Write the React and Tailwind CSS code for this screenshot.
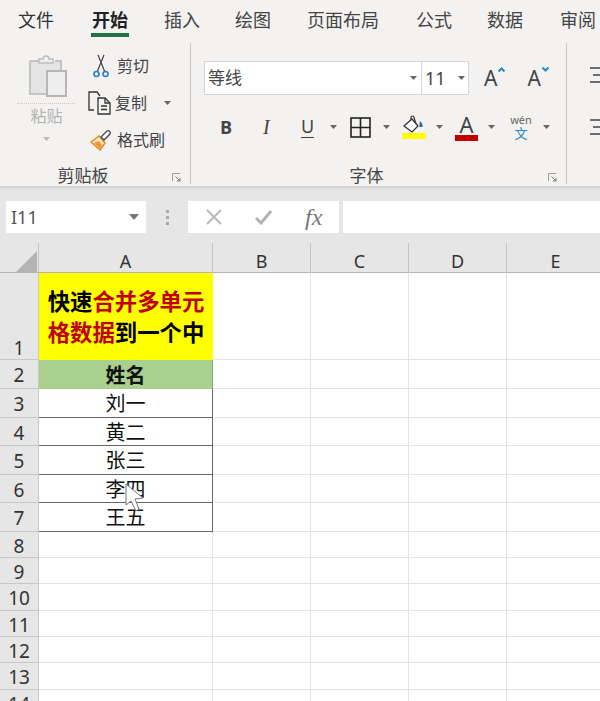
const CJK = { fontFamily: '"Noto Sans","Noto Sans CJK SC",sans-serif' }

const tabs = [
  { t: '文件', c: 'ml-[18px] text-[#333]' },
  { t: '开始', c: 'ml-[37px] font-bold text-[#222]' },
  { t: '插入', c: 'ml-[35px] text-[#444]' },
  { t: '绘图', c: 'ml-[35px] text-[#444]' },
  { t: '页面布局', c: 'ml-[36px] text-[#444]' },
  { t: '公式', c: 'ml-[37px] text-[#444]' },
  { t: '数据', c: 'ml-[35px] text-[#444]' },
  { t: '审阅', c: 'ml-[37px] text-[#444]' },
]

const rowHeights = [87, 29, 29, 28, 29, 28, 29, 26, 26, 27, 26, 26, 27, 26]

const Caret = ({ className = '', color = '#666' }) => (
  <svg width="7" height="4" viewBox="0 0 7 4" className={className}>
    <path d="M0 0h7L3.5 4z" fill={color} />
  </svg>
)

const Launcher = ({ className = '' }) => (
  <svg width="9" height="9" viewBox="0 0 9 9" className={className} fill="none">
    <path d="M8 .5H.5V8" stroke="#999" />
    <path d="M3.5 3.5 8 8M8 5v3H5" stroke="#777" />
  </svg>
)

const PasteIcon = () => (
  <svg width="40" height="44" viewBox="0 0 40 44" fill="none">
    <path d="M2 7h9M27 7h6v11M2 7v33h16" stroke="#c4c4c4" strokeWidth="2" fill="#e6e6e6" />
    <rect x="3" y="8" width="29" height="31" fill="#e4e4e4" />
    <path d="M11 7V5h4a3 3 0 0 1 6 0h4v4H11z" fill="#eee" stroke="#bdbdbd" strokeWidth="1.5" />
    <rect x="19" y="17" width="19" height="25" fill="#eeeeee" stroke="#b5b5b5" strokeWidth="2" />
  </svg>
)

const Scissors = () => (
  <svg width="16" height="24" viewBox="0 0 16 24" fill="none">
    <path d="M11 1 4.5 17M5 1l6.500 16" stroke="#444" strokeWidth="1.200" />
    <circle cx="3.500" cy="20" r="2.500" stroke="#2b7cd3" strokeWidth="1.600" />
    <circle cx="12.500" cy="20" r="2.500" stroke="#2b7cd3" strokeWidth="1.600" />
  </svg>
)

const CopyIcon = () => (
  <svg width="23" height="24" viewBox="0 0 23 24" fill="none" stroke="#333" strokeWidth="1.300">
    <path d="M6 19H1V1h8l3 4" />
    <path d="M10 7h7l5 5v11H10z" fill="#f3f2f1" />
    <path d="M17 7v5h5M13 15h6M13 18.500h6" />
  </svg>
)

const BrushIcon = () => (
  <svg width="23" height="21" viewBox="0 0 23 21" fill="none">
    <path d="M1 12 9 6l6 7-5 7z" fill="#fbe3c4" stroke="#e08a1e" strokeWidth="1.400" />
    <path d="M4 13l6 6 2-4-3-4z" fill="#ec9a2e" />
    <path d="m11 7 3 3 6-6c1-2-1-4-3-3z" fill="#fff" stroke="#444" strokeWidth="1.300" />
  </svg>
)

const BorderIcon = () => (
  <svg width="21" height="21" viewBox="0 0 21 21" fill="none" stroke="#222" strokeWidth="1.600">
    <rect x="1" y="1" width="19" height="19" />
    <path d="M10.500 1v19M1 10.500h19" />
  </svg>
)

const FillIcon = () => (
  <svg width="24" height="24" viewBox="0 0 24 24" fill="none">
    <path d="m2 11 8-7 6 7-6 6z" fill="#fff" stroke="#333" strokeWidth="1.300" />
    <path d="M9 5V2.500a1.500 1.500 0 0 1 3 0L14 9" stroke="#333" strokeWidth="1.200" />
    <path d="M18 6c2 2 3 4 2.500 6h-3V8z" fill="#1f6f9f" />
    <rect y="18" width="24" height="6" fill="#ffff00" />
  </svg>
)

const XIcon = () => (
  <svg width="16" height="16" viewBox="0 0 16 16" stroke="#b9b9b9" strokeWidth="2">
    <path d="m1 1 14 14M15 1 1 15" />
  </svg>
)

const CheckIcon = () => (
  <svg width="17" height="15" viewBox="0 0 17 15" fill="none" stroke="#b3b3b3" strokeWidth="3">
    <path d="m1 8 5 5L16 1" />
  </svg>
)

const AlignLines = ({ className = '' }) => (
  <svg width="12" height="18" viewBox="0 0 12 18" stroke="#444" strokeWidth="1.500" className={className}>
    <path d="M0 2h12M3 9h9M0 16h12" />
  </svg>
)

const Pointer = () => (
  <svg width="20" height="30" viewBox="0 0 20 30" className="absolute left-[125px] top-[483px]" fill="#fff" stroke="#777" strokeWidth="1">
    <path d="M1 1v21l5-4 5 10 3-2-4-10 8-1z" />
  </svg>
)

const GroupLabel = ({ children }) => (
  <div className="mt-auto mb-[-1px] grid h-[22px] grid-cols-[1fr_auto_1fr] items-center text-[17px] text-[#444]">
    <span />
    <span className="mr-[24px]">{children}</span>
    <Launcher className="mr-[9px] mt-[4px] justify-self-end" />
  </div>
)

const Clipboard = () => (
  <div className="flex h-[141px] w-[191px] shrink-0 flex-col border-r border-[#c8c8c8]">
    <div className="flex">
      <div className="ml-[17px] flex w-[58px] flex-col items-center">
        <div className="mt-[11px] mr-[-4px]">
          <PasteIcon />
        </div>
        <div className="mt-[5px] w-full border-t border-dotted border-[#c9c9c9]" />
        <span className="ml-[1px] text-[16px] text-[#b3b3b3]">粘贴</span>
        <Caret className="mt-[9px]" color="#bbb" />
      </div>
      <div className="ml-[13px] flex flex-col text-[16px] text-[#444]">
        <div className="mt-[10px] ml-[5px] flex h-[26px] items-center gap-[8px]">
          <Scissors />
          <span>剪切</span>
        </div>
        <div className="mt-[11px] flex h-[26px] items-center gap-[4px]">
          <CopyIcon />
          <span>复制</span>
          <Caret className="ml-[13px]" />
        </div>
        <div className="mt-[11px] ml-[2px] flex h-[26px] items-center gap-[4px]">
          <BrushIcon />
          <span>格式刷</span>
        </div>
      </div>
    </div>
    <GroupLabel>剪贴板</GroupLabel>
  </div>
)

const FontGroup = () => (
  <div className="flex h-[141px] w-[376px] shrink-0 flex-col border-r border-[#c8c8c8]">
    <div className="mt-[18px] flex items-center">
      <div className="ml-[13px] flex h-[34px] w-[265px] border border-[#d6d6d6] bg-white text-[#444]">
        <div className="flex w-[217px] items-center justify-between border-r border-[#d6d6d6] pl-[3px] pr-[4px] text-[17px]">
          <span>等线</span>
          <Caret />
        </div>
        <div className="flex flex-1 items-center justify-between pl-[3px] pr-[3px] text-[18px]">
          <span>11</span>
          <Caret />
        </div>
      </div>
      <div className="ml-[15px] flex items-start text-[#444]">
        <span className="text-[21px] leading-[26px]">A</span>
        <svg width="7" height="5" viewBox="0 0 7 5" fill="none" stroke="#2a86c4" strokeWidth="2" className="mt-[2px] ml-[1px]">
          <path d="m.5 4.500 3-3 3 3" />
        </svg>
      </div>
      <div className="ml-[22px] flex items-start text-[#444]">
        <span className="text-[21px] leading-[26px]">A</span>
        <svg width="7" height="5" viewBox="0 0 7 5" fill="none" stroke="#2a86c4" strokeWidth="2" className="mt-[2px] ml-[1px]">
          <path d="m.5.500 3 3 3-3" />
        </svg>
      </div>
    </div>
    <div className="mt-[14px] flex h-[36px] items-center text-[#444]">
      <span className="ml-[29px] w-[13px] text-[18px] font-bold" style={{ fontFamily: '"Open Sans",sans-serif' }}>B</span>
      <span className="ml-[30px] w-[10px] text-[20px] italic" style={{ fontFamily: '"Liberation Serif",serif' }}>I</span>
      <span className="ml-[28px] w-[13px] border-b border-[#444] text-[18px] leading-[21px]">U</span>
      <Caret className="ml-[16px]" />
      <div className="ml-[13px]">
        <BorderIcon />
      </div>
      <Caret className="ml-[12px]" />
      <div className="ml-[12px]">
        <FillIcon />
      </div>
      <Caret className="ml-[10px]" />
      <div className="ml-[12px] flex w-[23px] flex-col items-center">
        <span className="text-[22px] leading-[22px]">A</span>
        <div className="h-[6px] w-[23px] bg-[#c00000]" />
      </div>
      <Caret className="ml-[10px]" />
      <div className="ml-[14px] flex w-[24px] flex-col items-center">
        <span className="text-[11px] leading-[11px] text-[#666]">wén</span>
        <span className="mt-[2px] text-[13px] leading-[13px] text-[#2a86c4]">文</span>
      </div>
      <Caret className="ml-[10px]" />
    </div>
    <GroupLabel>字体</GroupLabel>
  </div>
)

const Ribbon = () => (
  <div className="bg-[#f3f2f1]">
    <div className="flex h-[43px] items-start text-[18px] whitespace-nowrap">
      {tabs.map((tab) => (
        <div key={tab.t} className={`${tab.c} flex shrink-0 flex-col items-center`}>
          <span className="mt-[8px] leading-[25px]">{tab.t}</span>
          {tab.t === '开始' && <div className="h-[4px] w-[38px] bg-[#217346]" />}
        </div>
      ))}
    </div>
    <div className="flex h-[143px]">
      <Clipboard />
      <FontGroup />
      <div className="flex flex-col pt-[23px]">
        <AlignLines className="ml-[23px]" />
        <AlignLines className="ml-[23px] mt-[34px]" />
      </div>
    </div>
  </div>
)

const FormulaBar = () => (
  <div className="flex h-[57px] bg-[#e6e6e6] pt-[15px] shadow-[inset_0_4px_3px_-2px_#cfcfcf]">
    <div className="ml-[6px] flex h-[32px] w-[140px] items-center justify-between bg-white pl-[5px] pr-[7px] text-[18px] text-[#555]">
      <span>I11</span>
      <svg width="10" height="6" viewBox="0 0 10 6">
        <path d="M0 0h10L5 6z" fill="#777" />
      </svg>
    </div>
    <div className="ml-[19px] mr-[19px] flex h-[32px] w-[4px] flex-col items-center justify-center gap-[3px]">
      <div className="size-[3px] bg-[#aaa]" />
      <div className="size-[3px] bg-[#aaa]" />
      <div className="size-[3px] bg-[#aaa]" />
    </div>
    <div className="flex h-[32px] w-[151px] items-center bg-white pl-[18px]">
      <XIcon />
      <div className="ml-[33px]">
        <CheckIcon />
      </div>
      <span className="ml-[33px] text-[24px] italic text-[#777]" style={{ fontFamily: '"Liberation Serif",serif' }}>fx</span>
    </div>
    <div className="ml-[4px] h-[32px] flex-1 bg-white" />
  </div>
)

const SheetHeader = () => (
  <div className="grid h-[30px] grid-cols-[39px_174px_98px_98px_98px_98px] border-b border-[#b5b5b5] bg-[#e6e6e6] text-[18px] text-[#333]">
    <div className="flex items-end justify-end border-r border-[#c4c4c4] pb-[1px] pr-[1px]">
      <svg width="23" height="23" viewBox="0 0 23 23">
        <path d="M23 0v23H0z" fill="#b4b4b4" />
      </svg>
    </div>
    {['A', 'B', 'C', 'D', 'E'].map((col) => (
      <div key={col} className="flex items-center justify-center border-r border-[#c4c4c4] pt-[5px]">
        {col}
      </div>
    ))}
  </div>
)

const cellText = {
  2: '姓名',
  3: '刘一',
  4: '黄二',
  5: '张三',
  6: '李四',
  7: '王五',
}

const Sheet = () => (
  <div className="grid grid-cols-[39px_174px_98px_98px_98px_98px] bg-white">
    {rowHeights.map((h, i) => {
      const row = i + 1
      return (
        <div key={row} className="col-span-6 grid grid-cols-subgrid grid-rows-[minmax(0,1fr)] overflow-hidden" style={{ height: h }}>
          <div className={`flex justify-center border-r border-b border-[#c8c8c8] bg-[#e6e6e6] text-[19px] text-[#333] ${row === 1 ? 'items-end leading-[22px]' : 'items-center pt-[2px] leading-[24px]'}`}>
            {row}
          </div>
          {row === 1 && (
            <div className="flex flex-col items-center justify-center bg-[#ffff00] text-[22.4px] leading-[31px] font-bold text-black">
              <div>
                快速<span className="text-[#c00000]">合并多单元</span>
              </div>
              <div>
                <span className="text-[#c00000]">格数据</span>到一个中
              </div>
            </div>
          )}
          {row === 2 && (
            <div className="flex items-center justify-center border-r border-[#8aa878] bg-[#a9d08e] pt-[2px] text-[20px] font-bold text-[#111]">
              {cellText[row]}
            </div>
          )}
          {row > 2 && row < 8 && (
            <div className="flex items-center justify-center border-r border-b border-[#666] pt-[2px] text-[20px] text-[#111]">
              {cellText[row]}
            </div>
          )}
          {row >= 8 && <div className="border-r border-b border-[#e4e4e4]" />}
          <div className="border-r border-b border-[#e4e4e4]" />
          <div className="border-r border-b border-[#e4e4e4]" />
          <div className="border-r border-b border-[#e4e4e4]" />
          <div className="border-b border-[#e4e4e4]" />
        </div>
      )
    })}
  </div>
)

export default function App() {
  return (
    <div className="relative h-[701px] w-[600px] overflow-hidden bg-white" style={CJK}>
      <Ribbon />
      <FormulaBar />
      <SheetHeader />
      <Sheet />
      <Pointer />
    </div>
  )
}
